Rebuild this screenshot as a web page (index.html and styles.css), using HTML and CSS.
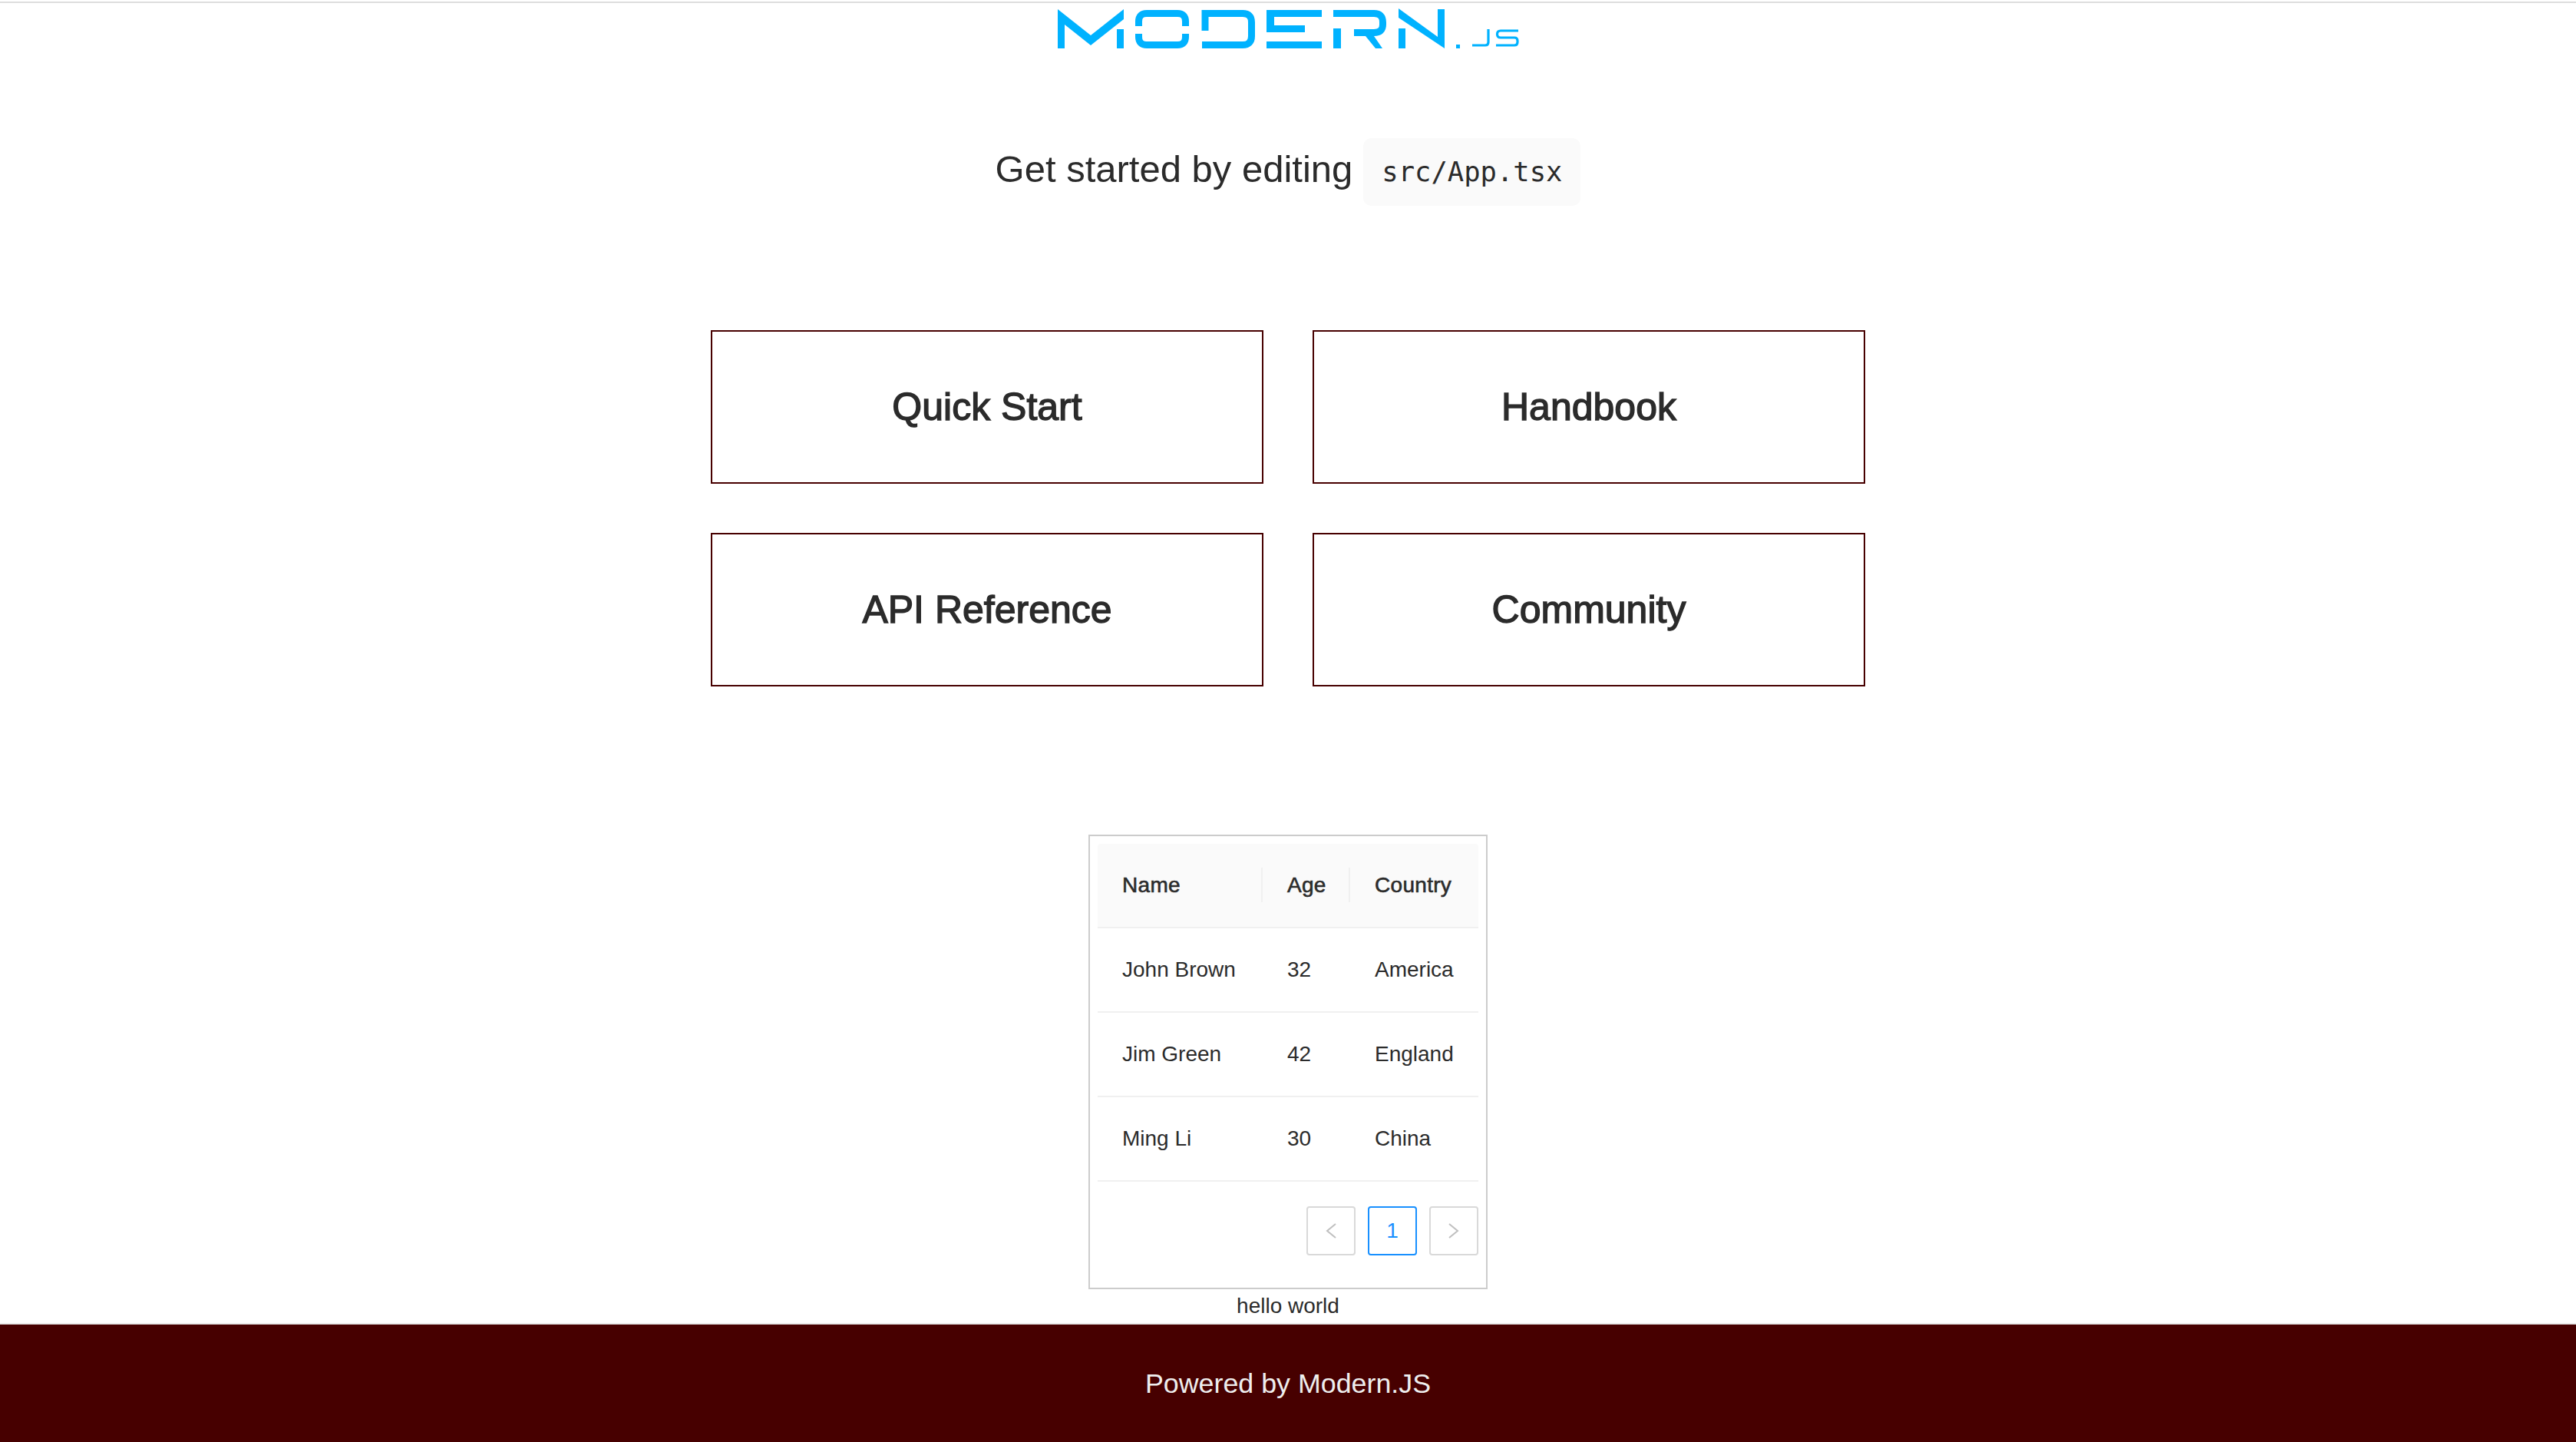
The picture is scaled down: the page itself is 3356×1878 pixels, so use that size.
FILE: index.html
```html
<!DOCTYPE html>
<html lang="en">
<head>
    <meta charset="UTF-8">
    <title>Modern.js App</title>
    <link rel="stylesheet" href="styles.css">
</head>
<body>
    <div class="page">
        <main class="main">
            <svg class="logo" viewBox="1376 4 604 64" role="img" aria-label="Modern.js">
                <g fill="#00b2ff">
                    <!-- M -->
                    <polygon points="1378,12 1421,46 1464,12 1464,25 1421,59 1387,32 1387,63 1378,63"/>
                    <rect x="1455" y="38" width="9" height="25"/>
                    <!-- E -->
                    <rect x="1650" y="13" width="72" height="9"/>
                    <rect x="1650" y="13" width="10" height="29"/>
                    <rect x="1650" y="33" width="50" height="9"/>
                    <rect x="1650" y="54" width="72" height="9"/>
                    <!-- R -->
                    <rect x="1737" y="37" width="10" height="26"/>
                    <polygon points="1779,47 1790,47 1801,63 1792,63"/>
                    <!-- N -->
                    <polygon points="1822,11 1873,48 1873,12 1882,12 1882,63 1822,23"/>
                    <rect x="1822" y="37" width="9" height="26"/>
                    <!-- dot -->
                    <rect x="1897" y="58" width="5" height="5"/>
                </g>
                <g fill="none" stroke="#00b2ff" stroke-width="9">
                    <!-- O -->
                    <path d="M1483.5 34V28Q1483.5 17.5 1494 17.5H1534Q1544.5 17.5 1544.5 28V34"/>
                    <path d="M1483.5 44V48Q1483.5 58.5 1494 58.5H1534Q1544.5 58.5 1544.5 48V44"/>
                    <!-- D -->
                    <path d="M1570 40V17.5H1619Q1630.5 17.5 1630.5 29V47Q1630.5 58.5 1619 58.5H1566"/>
                    <!-- R top -->
                    <path d="M1737 17.5H1790Q1801.5 17.5 1801.5 29V32Q1801.5 42.5 1790 42.5H1764"/>
                </g>
                <g fill="none" stroke="#00b2ff" stroke-width="3.2">
                    <!-- JS -->
                    <path d="M1939 38V55Q1939 59 1935 59H1918"/>
                    <path d="M1978 40H1955Q1950.5 40 1950.5 44.5Q1950.5 49 1955 49H1973Q1977 49 1977 53V55Q1977 59 1973 59H1949"/>
                </g>
            </svg>

            <p class="description">
                <span class="description-text">Get started by editing</span>
                <code class="code">src/App.tsx</code>
            </p>

            <div class="grid">
                <a class="card">Quick Start</a>
                <a class="card">Handbook</a>
                <a class="card">API Reference</a>
                <a class="card">Community</a>
            </div>

            <div class="table-box">
                <table class="table">
                    <thead>
                        <tr>
                            <th class="col-name">Name</th>
                            <th class="col-age">Age</th>
                            <th>Country</th>
                        </tr>
                    </thead>
                    <tbody>
                        <tr>
                            <td>John Brown</td>
                            <td>32</td>
                            <td>America</td>
                        </tr>
                        <tr>
                            <td>Jim Green</td>
                            <td>42</td>
                            <td>England</td>
                        </tr>
                        <tr>
                            <td>Ming Li</td>
                            <td>30</td>
                            <td>China</td>
                        </tr>
                    </tbody>
                </table>
                <ul class="pagination">
                    <li class="page-item">
                        <svg class="chevron" viewBox="0 0 14 20"><path d="M13 1L2 10L13 19"/></svg>
                    </li>
                    <li class="page-item active">1</li>
                    <li class="page-item">
                        <svg class="chevron" viewBox="0 0 14 20"><path d="M1 1L12 10L1 19"/></svg>
                    </li>
                </ul>
            </div>
            <div class="hello">hello world</div>
        </main>
        <footer class="footer">Powered by Modern.JS</footer>
    </div>
</body>
</html>
```

FILE: styles.css
```css
* {
    box-sizing: border-box;
}
html, body {
    margin: 0;
    padding: 0;
    background: #fff;
}
body {
    font-family: "Liberation Sans", Arial, sans-serif;
    color: #2b2b2b;
    padding-top: 2px;
}
.page {
    border-top: 2px solid #dedede;
    min-height: 1876px;
    display: flex;
    flex-direction: column;
}
.main {
    flex: 1;
    display: flex;
    flex-direction: column;
    align-items: center;
}
.logo {
    display: block;
    width: 604px;
    height: 64px;
}
.description {
    display: flex;
    align-items: center;
    gap: 14px;
    margin: 112px 0 0;
    font-size: 49px;
    line-height: 60px;
}
.description-text {
    margin-bottom: 8px;
}
.code {
    display: block;
    height: 88px;
    padding: 0 24px;
    background: #fafafa;
    border-radius: 10px;
    font-family: "DejaVu Sans Mono", monospace;
    font-size: 35.5px;
    line-height: 88px;
}
.grid {
    display: grid;
    grid-template-columns: 720px 720px;
    grid-auto-rows: 200px;
    gap: 64px;
    margin-top: 162px;
}
.card {
    display: flex;
    align-items: center;
    justify-content: center;
    border: 2px solid #470000;
    font-size: 50px;
    font-weight: 400;
    -webkit-text-stroke: 1.4px #2b2b2b;
}
.table-box {
    width: 520px;
    margin-top: 193px;
    padding: 10px;
    border: 2px solid #ccc;
}
.table {
    width: 100%;
    border-collapse: separate;
    border-spacing: 0;
    table-layout: fixed;
    font-size: 28px;
    line-height: 44px;
}
.table th, .table td {
    position: relative;
    padding: 32px;
    border-bottom: 2px solid #f0f0f0;
    text-align: left;
    white-space: nowrap;
}
.table th {
    background: #fafafa;
    font-weight: 400;
    letter-spacing: 0.3px;
    -webkit-text-stroke: 0.6px #2b2b2b;
}
.table th:first-child {
    border-top-left-radius: 4px;
}
.table th:last-child {
    border-top-right-radius: 4px;
}
.col-name {
    width: 215px;
}
.col-age {
    width: 114px;
}
.col-name::after, .col-age::after {
    content: "";
    position: absolute;
    top: 31px;
    right: 0;
    width: 2px;
    height: 45px;
    background: #f0f0f0;
}
.pagination {
    display: flex;
    justify-content: flex-end;
    gap: 16px;
    margin: 32px 0;
    padding: 0;
    list-style: none;
}
.page-item {
    display: flex;
    align-items: center;
    justify-content: center;
    width: 64px;
    height: 64px;
    border: 2px solid #d9d9d9;
    border-radius: 4px;
    font-size: 28px;
}
.page-item.active {
    border-color: #1890ff;
    color: #1890ff;
}
.chevron {
    width: 14px;
    height: 20px;
    fill: none;
    stroke: #bfbfbf;
    stroke-width: 2;
}
.hello {
    font-size: 28px;
    line-height: 44px;
}
.footer {
    height: 156px;
    display: flex;
    align-items: center;
    justify-content: center;
    background: #470000;
    border-top: 2px solid #eaeaea;
    color: #eee;
    font-size: 35.8px;
}
```
